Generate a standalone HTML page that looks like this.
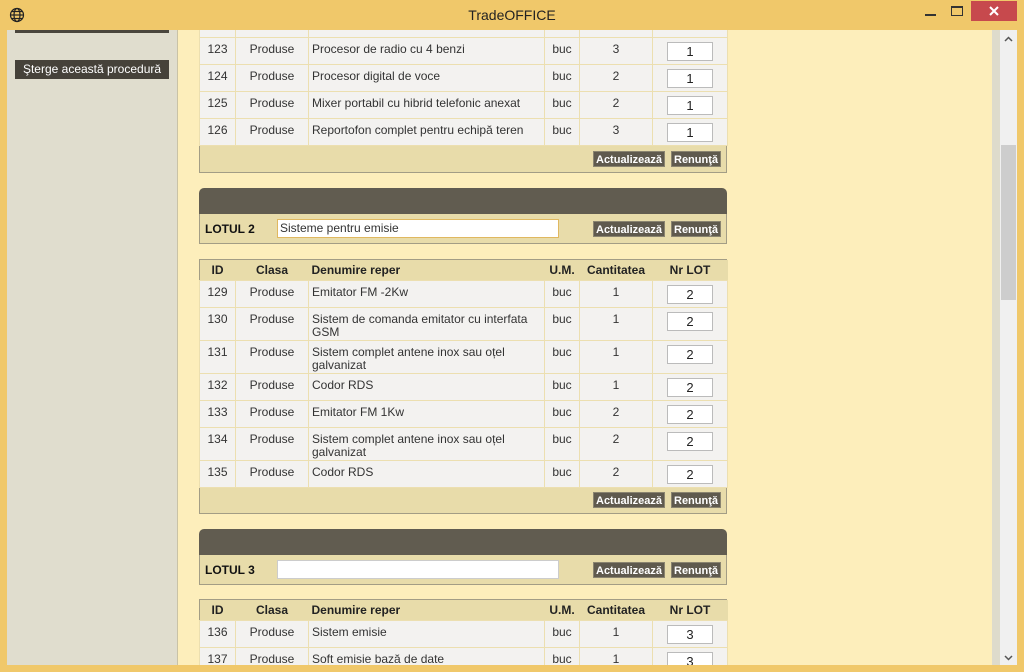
<!DOCTYPE html>
<html><head><meta charset="utf-8"><style>
*{margin:0;padding:0;box-sizing:border-box}
body{width:1024px;height:672px;overflow:hidden;background:#f0c86a;font-family:"Liberation Sans",Arial,sans-serif;font-size:12px;color:#333;position:relative}
.abs{position:absolute}
.title{left:0;top:0;width:1024px;height:30px;text-align:center;line-height:30px;font-size:14px;color:#222}
.side{left:7px;top:30px;width:171px;height:635px;background:#e0ddce;border-right:1px solid #c9c2a6}
.main{left:178px;top:30px;width:814px;height:635px;background:#fdeebb;overflow:hidden}
.strip{left:992px;top:30px;width:8px;height:635px;background:#dedbcc}
.sb{left:1000px;top:30px;width:17px;height:635px;background:#f0f0f0}
.thumb{left:1001px;top:145px;width:15px;height:155px;background:#cdcdcd}
table{border-collapse:collapse;table-layout:fixed;position:absolute;left:21px;width:528px}
td{border:1px solid #ecdfb0;background:#f3f2f0;vertical-align:top;padding:5px 3px 0;line-height:13px;color:#333}
td.c{text-align:center}
th{background:#e8dcaa;font-weight:bold;height:20px;color:#222;border:none}
.box{position:absolute;left:21px;width:528px;border:1px solid #a39d85}
.btn{position:absolute;background:#5f5a4e;color:#fff;font-weight:bold;font-size:11px;height:16px;line-height:16px;padding:0 2px;border:1px solid #8a8470}
.inp{display:block;margin:0 auto;width:46px;height:19px;border:1px solid #bbb;background:#fff;text-align:center;line-height:17px;font-size:13px;color:#222;margin-top:-1px}
.hdr{position:absolute;left:21px;width:528px;height:26px;background:#615c50;border-radius:5px 5px 0 0}
.lot{position:absolute;left:21px;width:528px;height:30px;background:#e8dcaa;border:1px solid #a39d85;border-top:none}
.lot b{position:absolute;left:5px;top:8px;color:#111}
.lin{position:absolute;left:77px;top:5px;width:282px;height:19px;background:#fff;border:1px solid #ccc;padding-left:2px;line-height:17px;color:#333}
</style></head><body>
<div class="abs title">TradeOFFICE</div>
<svg class="abs" style="left:9px;top:7px" width="16" height="16" viewBox="0 0 16 16" fill="none" stroke="#222" stroke-width="1.2"><circle cx="8" cy="8" r="6.5"/><ellipse cx="8" cy="8" rx="3" ry="6.5"/><line x1="1.5" y1="8" x2="14.5" y2="8"/><line x1="3" y1="4.5" x2="13" y2="4.5"/><line x1="3" y1="11.5" x2="13" y2="11.5"/></svg>
<div class="abs" style="left:925px;top:14px;width:11px;height:2px;background:#333"></div>
<div class="abs" style="left:951px;top:6px;width:12px;height:10px;border:1px solid #333;border-top-width:2px"></div>
<div class="abs" style="left:971px;top:1px;width:46px;height:20px;background:#c7494d"></div>
<svg class="abs" style="left:988px;top:6px" width="12" height="10" viewBox="0 0 12 10"><path d="M2 1L10 9M10 1L2 9" stroke="#fff" stroke-width="2"/></svg>
<div class="abs side">
 <div class="abs" style="left:8px;top:0;width:154px;height:3px;background:#4a463d"></div>
 <div class="abs" style="left:8px;top:30px;width:154px;height:19px;background:#46423a;color:#fff;font-size:12px;line-height:19px;text-align:center">Şterge această procedură</div>
</div>
<div class="abs main">
 <div class="box" style="top:-10px;height:153px;background:#e8dcaa"></div>
 <table style="top:-2px">
  <colgroup><col style="width:36px"><col style="width:73px"><col style="width:236px"><col style="width:35px"><col style="width:73px"><col style="width:75px"></colgroup>
  <tr style="height:9px"><td></td><td></td><td></td><td></td><td></td><td></td></tr>
  <tr style="height:27px"><td class="c">123</td><td class="c">Produse</td><td>Procesor de radio cu 4 benzi</td><td class="c">buc</td><td class="c">3</td><td><span class="inp">1</span></td></tr>
  <tr style="height:27px"><td class="c">124</td><td class="c">Produse</td><td>Procesor digital de voce</td><td class="c">buc</td><td class="c">2</td><td><span class="inp">1</span></td></tr>
  <tr style="height:27px"><td class="c">125</td><td class="c">Produse</td><td>Mixer portabil cu hibrid telefonic anexat</td><td class="c">buc</td><td class="c">2</td><td><span class="inp">1</span></td></tr>
  <tr style="height:27px"><td class="c">126</td><td class="c">Produse</td><td>Reportofon complet pentru echipă teren</td><td class="c">buc</td><td class="c">3</td><td><span class="inp">1</span></td></tr>
 </table>
 <div class="btn" style="left:415px;top:121px">Actualizează</div><div class="btn" style="left:493px;top:121px">Renunţă</div>

 <div class="hdr" style="top:158px"></div>
 <div class="lot" style="top:184px"><b>LOTUL 2</b><div class="lin" style="border-color:#e0b860">Sisteme pentru emisie</div></div>
 <div class="btn" style="left:415px;top:191px">Actualizează</div><div class="btn" style="left:493px;top:191px">Renunţă</div>

 <div class="box" style="top:229px;height:255px;background:#e8dcaa"></div>
 <table style="top:230px">
  <colgroup><col style="width:36px"><col style="width:73px"><col style="width:236px"><col style="width:35px"><col style="width:73px"><col style="width:75px"></colgroup>
  <tr><th>ID</th><th>Clasa</th><th style="text-align:left;padding-left:3px">Denumire reper</th><th>U.M.</th><th>Cantitatea</th><th>Nr LOT</th></tr>
  <tr style="height:27px"><td class="c">129</td><td class="c">Produse</td><td>Emitator FM -2Kw</td><td class="c">buc</td><td class="c">1</td><td><span class="inp">2</span></td></tr>
  <tr style="height:33px"><td class="c">130</td><td class="c">Produse</td><td>Sistem de comanda emitator cu interfata GSM</td><td class="c">buc</td><td class="c">1</td><td><span class="inp">2</span></td></tr>
  <tr style="height:33px"><td class="c">131</td><td class="c">Produse</td><td>Sistem complet antene inox sau oțel galvanizat</td><td class="c">buc</td><td class="c">1</td><td><span class="inp">2</span></td></tr>
  <tr style="height:27px"><td class="c">132</td><td class="c">Produse</td><td>Codor RDS</td><td class="c">buc</td><td class="c">1</td><td><span class="inp">2</span></td></tr>
  <tr style="height:27px"><td class="c">133</td><td class="c">Produse</td><td>Emitator FM 1Kw</td><td class="c">buc</td><td class="c">2</td><td><span class="inp">2</span></td></tr>
  <tr style="height:33px"><td class="c">134</td><td class="c">Produse</td><td>Sistem complet antene inox sau oțel galvanizat</td><td class="c">buc</td><td class="c">2</td><td><span class="inp">2</span></td></tr>
  <tr style="height:27px"><td class="c">135</td><td class="c">Produse</td><td>Codor RDS</td><td class="c">buc</td><td class="c">2</td><td><span class="inp">2</span></td></tr>
 </table>
 <div class="btn" style="left:415px;top:462px">Actualizează</div><div class="btn" style="left:493px;top:462px">Renunţă</div>

 <div class="hdr" style="top:499px"></div>
 <div class="lot" style="top:525px"><b>LOTUL 3</b><div class="lin"></div></div>
 <div class="btn" style="left:415px;top:532px">Actualizează</div><div class="btn" style="left:493px;top:532px">Renunţă</div>

 <div class="box" style="top:569px;height:80px;background:#e8dcaa"></div>
 <table style="top:570px">
  <colgroup><col style="width:36px"><col style="width:73px"><col style="width:236px"><col style="width:35px"><col style="width:73px"><col style="width:75px"></colgroup>
  <tr><th>ID</th><th>Clasa</th><th style="text-align:left;padding-left:3px">Denumire reper</th><th>U.M.</th><th>Cantitatea</th><th>Nr LOT</th></tr>
  <tr style="height:27px"><td class="c">136</td><td class="c">Produse</td><td>Sistem emisie</td><td class="c">buc</td><td class="c">1</td><td><span class="inp">3</span></td></tr>
  <tr style="height:27px"><td class="c">137</td><td class="c">Produse</td><td>Soft emisie bază de date</td><td class="c">buc</td><td class="c">1</td><td><span class="inp">3</span></td></tr>
 </table>
</div>
<div class="abs strip"></div>
<div class="abs sb"></div>
<div class="abs thumb"></div>
<svg class="abs" style="left:1004px;top:36px" width="9" height="6" viewBox="0 0 9 6"><path d="M1 5L4.5 1.5L8 5" stroke="#555" stroke-width="1.5" fill="none"/></svg>
<svg class="abs" style="left:1004px;top:655px" width="9" height="6" viewBox="0 0 9 6"><path d="M1 1L4.5 4.5L8 1" stroke="#555" stroke-width="1.5" fill="none"/></svg>
</body></html>
